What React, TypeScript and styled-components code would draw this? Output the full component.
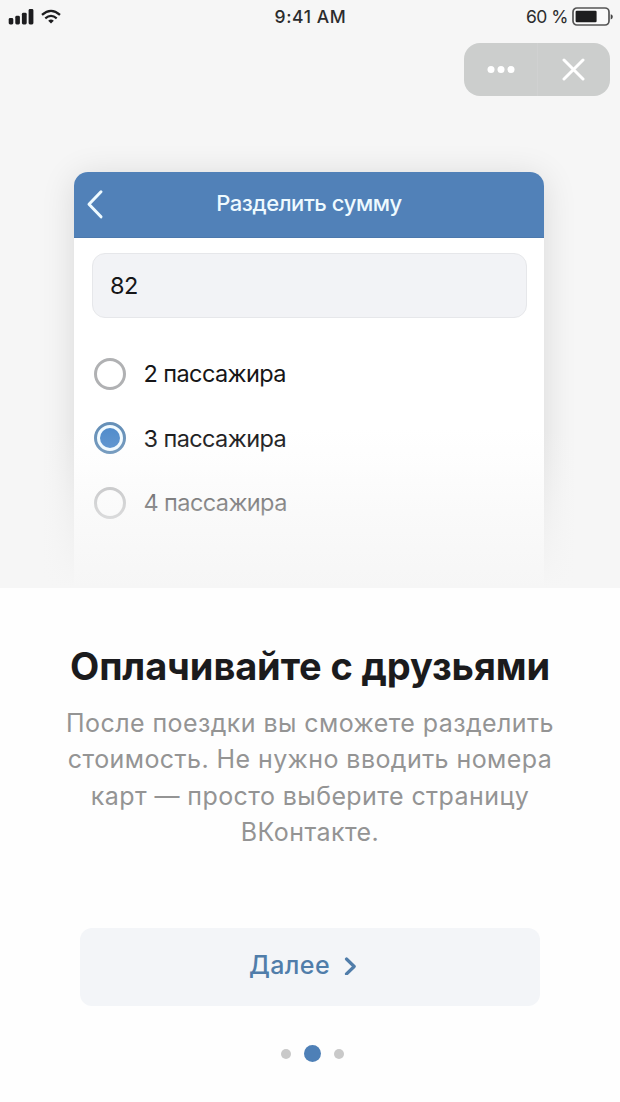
import React from 'react';
import styled, { createGlobalStyle } from 'styled-components';

const GlobalStyle = createGlobalStyle`
  *, *::before, *::after { box-sizing: border-box; }
  body {
    margin: 0;
    background: #fefefe;
    font-family: Inter, "Liberation Sans", sans-serif;
    color: #1b1b1d;
  }
`;

const Screen = styled.main`
  width: 620px;
  height: 1102px;
  display: flex;
  flex-direction: column;
  align-items: center;
  overflow: hidden;
  background: #fefefe;
`;

const Hero = styled.section`
  position: relative;
  width: 100%;
  height: 588px;
  flex: none;
  display: flex;
  flex-direction: column;
  overflow: hidden;
  background: #f6f6f6;
`;

const StatusBar = styled.header`
  height: 34px;
  flex: none;
  display: grid;
  grid-template-columns: 1fr auto 1fr;
  align-items: center;
  padding: 0 7px 0 8px;
`;

const StatusGroup = styled.div<{ $end?: boolean }>`
  display: flex;
  align-items: center;
  gap: ${(p) => (p.$end ? 4 : 7)}px;
  justify-content: ${(p) => (p.$end ? 'flex-end' : 'flex-start')};
`;

const StatusText = styled.span<{ $weight: number; $spacing: number }>`
  font-size: 17.5px;
  line-height: 34px;
  font-weight: ${(p) => p.$weight};
  letter-spacing: ${(p) => p.$spacing}px;
  white-space: nowrap;
  color: #2c2c2d;
`;

const Capsule = styled.div`
  align-self: flex-end;
  flex: none;
  width: 146px;
  height: 53px;
  margin: 9px 10px 0 0;
  display: grid;
  grid-template-columns: 74px 72px;
  border-radius: 16px;
  background: #cccecd;
`;

const CapsuleButton = styled.button<{ $divided?: boolean }>`
  display: flex;
  align-items: center;
  justify-content: center;
  padding: 0;
  border: 0;
  border-right: ${(p) => (p.$divided ? '1px solid #d0d1d1' : '0')};
  background: none;
`;

const Card = styled.div`
  width: 470px;
  height: 440px;
  flex: none;
  margin: 76px 0 0 74px;
  border-radius: 14px 14px 0 0;
  background: #fff;
  box-shadow: 0 4px 34px rgba(0, 0, 0, 0.12);
`;

const CardHeader = styled.div`
  height: 66px;
  display: grid;
  grid-template-columns: 42px 1fr 42px;
  align-items: center;
  border-radius: 14px 14px 0 0;
  background: #5181b8;
  border-bottom: 1px solid #4c79ad;
`;

const BackIcon = styled.svg`
  display: block;
  margin: 0 0 2px 12px;
`;

const CardTitle = styled.h2`
  margin: 0;
  padding-bottom: 3px;
  text-align: center;
  font-size: 22px;
  line-height: 30px;
  font-weight: 500;
  letter-spacing: -0.42px;
  white-space: nowrap;
  color: #eefaff;
`;

const AmountField = styled.div`
  height: 65px;
  margin: 15px 17px 0 18px;
  padding-left: 17px;
  display: flex;
  align-items: center;
  border: 1.5px solid #e6e7ea;
  border-radius: 13px;
  background: #f2f3f6;
  font-size: 23.5px;
  letter-spacing: -0.6px;
  color: #161618;
`;

const Options = styled.div`
  padding: 23.5px 0 0 19.5px;
`;

const Option = styled.div`
  height: 64.5px;
  display: flex;
  align-items: center;
  gap: 18px;
  font-size: 23.5px;
  letter-spacing: -0.6px;
  white-space: nowrap;
  color: #161618;
`;

const Radio = styled.span<{ $checked?: boolean }>`
  width: 32px;
  height: 32px;
  display: flex;
  align-items: center;
  justify-content: center;
  border: 3px solid ${(p) => (p.$checked ? '#6690b8' : '#b0b1b3')};
  border-radius: 50%;
  background: ${(p) => (p.$checked ? '#f2fbff' : '#fff')};

  &::after {
    content: '';
    width: 20px;
    height: 20px;
    border-radius: 50%;
    background: ${(p) => (p.$checked ? '#518ccb' : 'transparent')};
  }
`;

const Fade = styled.div`
  position: absolute;
  inset: 428px 0 0;
  background: linear-gradient(
    rgba(246, 246, 246, 0),
    rgba(246, 246, 246, 0.16) 20%,
    rgba(246, 246, 246, 0.5) 47%,
    rgba(246, 246, 246, 0.75) 72%,
    #f6f6f6
  );
`;

const Title = styled.h1`
  margin: 55px 0 0;
  font-size: 38px;
  line-height: 46px;
  font-weight: 700;
  letter-spacing: -0.12px;
  white-space: nowrap;
`;

const Description = styled.p`
  margin: 16px 0 0;
  text-align: center;
  font-size: 25px;
  line-height: 36.4px;
  letter-spacing: 0.42px;
  white-space: nowrap;
  color: #949494;
`;

const NextButton = styled.button`
  width: 460px;
  height: 78px;
  flex: none;
  margin: 77px 0 0;
  padding: 0 14px 4px 0;
  display: flex;
  align-items: center;
  justify-content: center;
  gap: 14px;
  border: 0;
  border-radius: 12px;
  background: #f3f5f8;
  font: 500 25px Inter, "Liberation Sans", sans-serif;
  letter-spacing: 0.4px;
  color: #507daa;
`;

const Pager = styled.div`
  height: 18px;
  margin: 39px 0 0 5px;
  display: flex;
  align-items: center;
  gap: 13px;
`;

const PageDot = styled.span<{ $active?: boolean }>`
  width: ${(p) => (p.$active ? 17 : 10)}px;
  height: ${(p) => (p.$active ? 17 : 10)}px;
  border-radius: 50%;
  background: ${(p) => (p.$active ? '#4e80b7' : '#c9c9c9')};
`;

const options = [
  { label: '2 пассажира', checked: false },
  { label: '3 пассажира', checked: true },
  { label: '4 пассажира', checked: false },
];

export default function App() {
  return (
    <>
      <GlobalStyle />
      <Screen>
        <Hero>
          <StatusBar>
            <StatusGroup>
              <svg width="26" height="18" viewBox="0 0 26 18" fill="#1d1d1f">
                <rect x="0.7" y="10" width="4.6" height="6.5" rx="1.4" />
                <rect x="7.3" y="7.8" width="4.6" height="8.7" rx="1.4" />
                <rect x="13.9" y="4.8" width="4.8" height="11.7" rx="1.4" />
                <rect x="20.6" y="1" width="4.8" height="15.5" rx="1.4" />
              </svg>
              <svg width="20" height="16" viewBox="0 0 20 16" fill="none" stroke="#1d1d1f">
                <path d="M1 5.9Q10 -2.1 19 5.9" strokeWidth="2.3" />
                <path d="M4.3 9.3Q10 4.3 15.7 9.3" strokeWidth="2.2" />
                <path d="M7.2 11.8Q10 9.3 12.8 11.8L10 14.6Z" fill="#1d1d1f" stroke="none" />
              </svg>
            </StatusGroup>
            <StatusText $weight={500} $spacing={0.6}>9:41 AM</StatusText>
            <StatusGroup $end>
              <StatusText $weight={400} $spacing={-0.5}>60 %</StatusText>
              <svg width="41" height="20" viewBox="0 0 41 20">
                <rect x="1" y="1" width="36" height="17" rx="4" fill="#fafafa" stroke="#555" strokeWidth="1.7" />
                <rect x="3.6" y="3.8" width="21" height="11.5" rx="1.2" fill="#1e1e1f" />
                <path d="M38.7 7.2Q40.8 7.6 40.8 9.8T38.7 12.4Z" fill="#444" />
              </svg>
            </StatusGroup>
          </StatusBar>
          <Capsule>
            <CapsuleButton $divided aria-label="Меню">
              <svg width="28" height="8" viewBox="0 0 28 8" fill="#fff">
                <circle cx="4" cy="3.6" r="3.5" />
                <circle cx="14" cy="3.6" r="3.5" />
                <circle cx="24" cy="3.6" r="3.5" />
              </svg>
            </CapsuleButton>
            <CapsuleButton aria-label="Закрыть">
              <svg width="24" height="24" viewBox="0 0 24 24" fill="none" stroke="#fff" strokeWidth="3" strokeLinecap="round">
                <path d="M2 2L21 21M21 2L2 21" />
              </svg>
            </CapsuleButton>
          </Capsule>
          <Card>
            <CardHeader>
              <BackIcon width="18" height="30" viewBox="0 0 18 30" fill="none" stroke="#eefaff" strokeWidth="3" strokeLinecap="round" strokeLinejoin="round">
                <path d="M15 2.8L3 15.3L15 27.8" />
              </BackIcon>
              <CardTitle>Разделить сумму</CardTitle>
            </CardHeader>
            <AmountField>82</AmountField>
            <Options>
              {options.map((o) => (
                <Option key={o.label}>
                  <Radio $checked={o.checked} />
                  {o.label}
                </Option>
              ))}
            </Options>
          </Card>
          <Fade />
        </Hero>
        <Title>Оплачивайте с друзьями</Title>
        <Description>
          После поездки вы сможете разделить
          <br />
          стоимость. Не нужно вводить номера
          <br />
          карт — просто выберите страницу
          <br />
          ВКонтакте.
        </Description>
        <NextButton>
          Далее
          <svg width="13" height="20" viewBox="0 0 13 20" fill="none" stroke="#507daa" strokeWidth="3.2" strokeLinecap="round" strokeLinejoin="round">
            <path d="M2.5 4L10.2 11.5L2.5 19" />
          </svg>
        </NextButton>
        <Pager>
          <PageDot />
          <PageDot $active />
          <PageDot />
        </Pager>
      </Screen>
    </>
  );
}
